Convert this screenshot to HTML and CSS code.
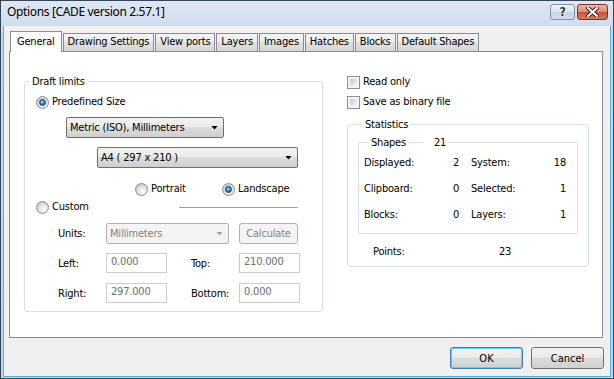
FILE: index.html
```html
<!DOCTYPE html>
<html lang="en">
<head>
    <meta charset="UTF-8">
    <title>Options [CADE version 2.57.1]</title>
    <link rel="stylesheet" href="styles.css">
</head>
<body>
    <div class="window">
        <div class="titlebar">
            <span class="caption">Options [CADE version 2.57.1]</span>
            <div class="caption-buttons">
                <span class="cap-btn help">?</span>
                <span class="cap-btn close">
                    <svg width="13" height="10" viewBox="0 0 13 10">
                        <path d="M2 1 L11 9 M11 1 L2 9" stroke="#3a2420" stroke-width="4" stroke-linecap="square"/>
                        <path d="M2 1 L11 9 M11 1 L2 9" stroke="#fff" stroke-width="2" stroke-linecap="square"/>
                    </svg>
                </span>
            </div>
        </div>

        <div class="client">
            <div class="tabs">
                <span class="tab active">General</span>
                <span class="tab">Drawing Settings</span>
                <span class="tab">View ports</span>
                <span class="tab">Layers</span>
                <span class="tab">Images</span>
                <span class="tab">Hatches</span>
                <span class="tab">Blocks</span>
                <span class="tab">Default Shapes</span>
            </div>

            <div class="panel">
                <fieldset class="group draft">
                    <legend>Draft limits</legend>
                    <label class="opt predefined"><span class="radio on"></span>Predefined Size</label>
                    <div class="combo metric">Metric (ISO), Millimeters<span class="arrow"></span></div>
                    <div class="combo paper">A4 ( 297 x 210 )<span class="arrow"></span></div>
                    <div class="orient">
                        <label class="opt portrait"><span class="radio"></span>Portrait</label>
                        <label class="opt"><span class="radio on"></span>Landscape</label>
                    </div>
                    <div class="custom-row">
                        <label class="opt"><span class="radio"></span>Custom</label>
                        <span class="rule"></span>
                    </div>
                    <div class="custom-grid">
                        <span class="lbl">Units:</span>
                        <div class="combo disabled units">Millimeters<span class="arrow"></span></div>
                        <span class="btn disabled calc">Calculate</span>

                        <span class="lbl">Left:</span>
                        <span class="field">0.000</span>
                        <span class="lbl second">Top:</span>
                        <span class="field">210.000</span>

                        <span class="lbl">Right:</span>
                        <span class="field">297.000</span>
                        <span class="lbl second">Bottom:</span>
                        <span class="field">0.000</span>
                    </div>
                </fieldset>

                <div class="side">
                    <label class="opt"><span class="check"></span>Read only</label>
                    <label class="opt binary"><span class="check"></span>Save as binary file</label>

                    <fieldset class="group stats">
                        <legend>Statistics</legend>
                        <fieldset class="group shapes">
                            <legend><span>Shapes</span><span class="dash"></span><span>21</span></legend>
                            <div class="shape-grid">
                                <span>Displayed:</span><span class="num">2</span>
                                <span class="lbl2">System:</span><span class="num">18</span>
                                <span>Clipboard:</span><span class="num">0</span>
                                <span class="lbl2">Selected:</span><span class="num">1</span>
                                <span>Blocks:</span><span class="num">0</span>
                                <span class="lbl2">Layers:</span><span class="num">1</span>
                            </div>
                        </fieldset>
                        <div class="points">
                            <span class="points-label">Points:</span><span>23</span>
                        </div>
                    </fieldset>
                </div>
            </div>

            <div class="footer">
                <button class="btn default">OK</button>
                <button class="btn">Cancel</button>
            </div>
        </div>
    </div>
</body>
</html>
```

FILE: styles.css
```css
body {
    margin: 0;
    font-family: "DejaVu Sans Condensed", "DejaVu Sans", sans-serif;
    font-stretch: condensed;
    font-size: 11px;
    letter-spacing: -0.2px;
    color: #000;
}
.window {
    width: 614px;
    height: 379px;
    box-sizing: border-box;
    border: 1px solid #34465c;
    padding: 0 2px 1px;
    background: linear-gradient(#dde7f3, #c8d7e9 40px, #c4d3e6);
    display: flex;
    flex-direction: column;
}
.titlebar {
    height: 25px;
    display: flex;
    justify-content: space-between;
    align-items: flex-start;
    padding: 3px 3px 0 4px;
    box-sizing: border-box;
}
.caption {
    font-family: "Noto Sans", sans-serif;
    font-size: 12px;
    letter-spacing: -0.35px;
    line-height: 16px;
}
.caption-buttons {
    display: flex;
    gap: 2px;
}
.cap-btn {
    height: 16px;
    box-sizing: border-box;
    border-radius: 3px;
    display: flex;
    align-items: center;
    justify-content: center;
}
.help {
    width: 25px;
    border: 1px solid #8093ab;
    background: linear-gradient(#eef3f9, #dbe4ef 50%, #c6d4e5 51%, #d2dcea);
    font-family: "DejaVu Sans", sans-serif;
    font-weight: bold;
    font-size: 12px;
    color: #263447;
    text-shadow: 0 0 1px #fff, 0 0 1px #fff;
}
.close {
    width: 31px;
    border: 1px solid #7e3529;
    background: linear-gradient(#edb3a5, #dc8a74 50%, #c84f37 51%, #d9785d);
}
.client {
    flex: 1;
    background: #f0f0f0;
    border: 1px solid #4fb2e8;
    border-top: none;
    display: flex;
    flex-direction: column;
}

/* tabs */
.tabs {
    display: flex;
    align-items: flex-end;
    height: 20px;
    margin: 5px 0 0 6px;
    position: relative;
    z-index: 1;
}
.tab {
    height: 18px;
    box-sizing: border-box;
    padding: 0 4px;
    border: 1px solid #898c95;
    border-bottom: none;
    margin-left: 1px;
    line-height: 16px;
    background: linear-gradient(#f4f4f4, #ededed 45%, #e0e0e0 50%, #d6d6d6);
}
.tab.active {
    height: 21px;
    margin: 0 0 -1px 0;
    padding: 0 6px;
    background: #fff;
    line-height: 19px;
}
.panel {
    margin-left: 5px;
    width: 594px;
    height: 287px;
    box-sizing: border-box;
    border: 1px solid #898c95;
    background: #fff;
    display: flex;
    gap: 24px;
    padding: 22px 0 0 14px;
}

/* group boxes */
.group {
    margin: 0;
    min-width: 0;
    border: 1px solid #d5dfe5;
    border-radius: 3px;
}
.group legend {
    margin-left: 5px;
    padding: 1px 2px 0;
    line-height: 13px;
}
.draft {
    width: 299px;
    height: 238px;
    box-sizing: border-box;
    padding: 7px 0 8px 0;
}
.opt {
    display: flex;
    align-items: center;
    gap: 3px;
    height: 14px;
    line-height: 14px;
}
.radio {
    width: 13px;
    height: 13px;
    box-sizing: border-box;
    border-radius: 50%;
    border: 1px solid #8e8f8f;
    background: radial-gradient(circle at 60% 65%, #fbfbfb 0, #e9e9e9 35%, #c9c9c9 75%);
    display: flex;
    align-items: center;
    justify-content: center;
}
.radio.on::after {
    content: "";
    width: 7px;
    height: 7px;
    box-sizing: border-box;
    border-radius: 50%;
    border: 1px solid #1c3f66;
    background: radial-gradient(circle at 45% 40%, #b9ecff 0, #2c8ce0 45%, #0b4c96 100%);
}
.check {
    width: 13px;
    height: 13px;
    box-sizing: border-box;
    border: 1px solid #8e8f8f;
    padding: 2px;
    background: linear-gradient(135deg, #c6cbd2, #f6f6f6) content-box, #f4f4f4;
}
.predefined {
    margin-left: 11px;
}
.combo {
    height: 21px;
    box-sizing: border-box;
    border: 1px solid #707070;
    border-radius: 2px;
    background: linear-gradient(#f2f2f2, #ebebeb 45%, #dddddd 50%, #cfcfcf);
    display: flex;
    align-items: center;
    justify-content: space-between;
    padding: 0 5px 0 3px;
    white-space: nowrap;
}
.arrow {
    width: 7px;
    height: 4px;
    background: #000;
    clip-path: polygon(0 0, 100% 0, 50% 100%);
}
.metric {
    width: 158px;
    margin: 8px 0 0 41px;
}
.paper {
    width: 201px;
    margin: 9px 0 0 72px;
}
.combo.disabled {
    border-color: #adb2b5;
    background: #f4f4f4;
    color: #838383;
}
.combo.disabled .arrow {
    background: #a3a3a3;
}
.orient {
    display: flex;
    margin: 14px 0 0 110px;
}
.portrait {
    width: 87px;
}
.custom-row {
    display: flex;
    align-items: center;
    justify-content: space-between;
    margin-top: 4px;
    padding: 0 24px 0 11px;
}
.rule {
    width: 119px;
    height: 1px;
    background: #a0a0a0;
}
.custom-grid {
    display: grid;
    grid-template-columns: 48px 61px 24px 48px 60px;
    grid-template-rows: 21px 21px 20px;
    row-gap: 9px;
    align-items: center;
    margin: 9px 0 0 33px;
}
.custom-grid .second {
    grid-column: 4;
}
.units {
    grid-column: 2 / 5;
    width: 123px;
}
.field {
    width: 61px;
    height: 20px;
    box-sizing: border-box;
    border: 1px solid #c9ccd1;
    padding-left: 4px;
    line-height: 15px;
    color: #6d6d6d;
    align-self: start;
}

/* right column */
.side {
    width: 242px;
    padding-top: 1px;
}
.binary {
    margin-top: 6px;
}
.stats {
    margin-top: 8px;
    padding: 4px 10px 7px 10px;
}
.shapes {
    width: 220px;
    box-sizing: border-box;
    padding: 7px 0 11px 5px;
}
.shapes legend {
    display: flex;
    align-items: center;
}
.dash {
    width: 14px;
    height: 1px;
    background: #d5dfe5;
    margin: 0 11px 0 3px;
}
.shape-grid {
    display: grid;
    grid-template-columns: 75px 20px 81px 26px;
    grid-auto-rows: 14px;
    row-gap: 12px;
    line-height: 14px;
}
.shape-grid .num {
    text-align: right;
}
.shape-grid .lbl2 {
    padding-left: 12px;
}
.points {
    display: flex;
    margin-top: 11px;
    padding-left: 15px;
    line-height: 14px;
}
.points-label {
    width: 126px;
}

/* buttons */
.footer {
    display: flex;
    justify-content: flex-end;
    gap: 8px;
    padding: 9px 6px 0 0;
}
.btn {
    width: 73px;
    height: 22px;
    box-sizing: border-box;
    border: 1px solid #707070;
    border-radius: 3px;
    background: linear-gradient(#f2f2f2, #ebebeb 45%, #dddddd 50%, #cfcfcf);
    font: inherit;
    color: #000;
    padding: 0;
    display: flex;
    align-items: center;
    justify-content: center;
}
.btn.default {
    border-color: #3c7fb1;
    box-shadow: inset 0 0 0 1px #5fd0f5;
}
.btn.disabled {
    border-color: #adb2b5;
    background: #f4f4f4;
    color: #838383;
}
.btn.calc {
    grid-column: 5;
    width: 59px;
    height: 21px;
    align-self: start;
}
```
